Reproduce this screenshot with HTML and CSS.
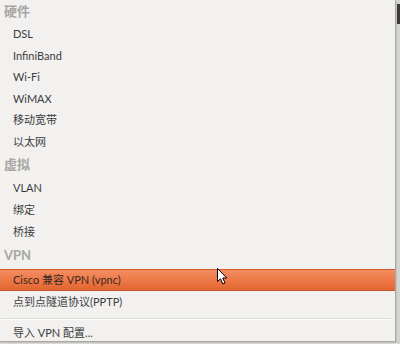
FILE: index.html
```html
<!DOCTYPE html>
<html lang="zh-CN">
<head>
  <meta charset="UTF-8">
  <title>添加连接</title>
  <link rel="stylesheet" href="styles.css">
</head>
<body>
  <div class="screen">
    <div class="menu">
      <div class="group hw">
        <div class="header">硬件</div>
        <div class="item">DSL</div>
        <div class="item">InfiniBand</div>
        <div class="item">Wi-Fi</div>
        <div class="item">WiMAX</div>
        <div class="item">移动宽带</div>
        <div class="item">以太网</div>
      </div>
      <div class="group">
        <div class="header">虚拟</div>
        <div class="item">VLAN</div>
        <div class="item">绑定</div>
        <div class="item">桥接</div>
      </div>
      <div class="group">
        <div class="header">VPN</div>
        <div class="item active">Cisco 兼容 VPN (vpnc)</div>
        <div class="item">点到点隧道协议(PPTP)</div>
      </div>
      <div class="separator"></div>
      <div class="item last">导入 VPN 配置...</div>

      <!-- mouse pointer -->
      <svg class="cursor" width="12" height="18" viewBox="0 0 12 18">
        <path d="M0.5 0.5 L0.5 13.5 L3.5 10.8 L5.8 16 L8 15 L5.8 10 L9.8 10 Z" fill="#fff" stroke="#000" stroke-width="1" stroke-linejoin="round"/>
      </svg>
    </div>
    <div class="side">
      <div class="side-dark"></div>
    </div>
  </div>
</body>
</html>
```

FILE: styles.css
```css
* {
  box-sizing: border-box;
}
body {
  margin: 0;
  background: #d9d8d4;
  font-family: 'Lato', 'Noto Sans CJK SC', sans-serif;
}
.screen {
  display: flex;
  width: 400px;
  height: 344px;
  overflow: hidden;
}
.menu {
  position: relative;
  width: 396px;
  height: 342px;
  background: #f2f1f0;
  border-right: 1px solid #a9a8a4;
  border-bottom: 1px solid #a9a8a4;
  box-shadow: 1px 1px 0 #c4c3bf;
}
.header {
  height: 23px;
  line-height: 23px;
  padding-left: 4px;
  font-size: 13px;
  font-weight: bold;
  color: #a8a6a2;
}
.group + .group .header {
  height: 25px;
  line-height: 25px;
}
.item {
  height: 22px;
  line-height: 22px;
  padding-left: 13px;
  font-size: 11px;
  color: #3c3c3c;
}
.hw .item {
  height: 21.5px;
  line-height: 21.5px;
}
.item.active {
  height: 22px;
  line-height: 20px;
  margin-top: 1px;
  color: #3a2a22;
  background: linear-gradient(#f48d61, #e4652f);
  border-top: 1px solid #d2602f;
  border-bottom: 1px solid #c9562a;
}
.separator {
  height: 2px;
  margin: 5px 4px 3px 1px;
  border-top: 1px solid #dcdad6;
  border-bottom: 1px solid #fbfbfa;
}
.item.last {
  height: 20px;
  line-height: 20px;
}
.cursor {
  position: absolute;
  left: 217px;
  top: 268px;
}
.side {
  flex: 1;
  background: #d3d3cf;
  border-left: 1px solid #e9e9e6;
}
.side-dark {
  margin-top: 4px;
  height: 20px;
  background: #3d3c38;
}
```
